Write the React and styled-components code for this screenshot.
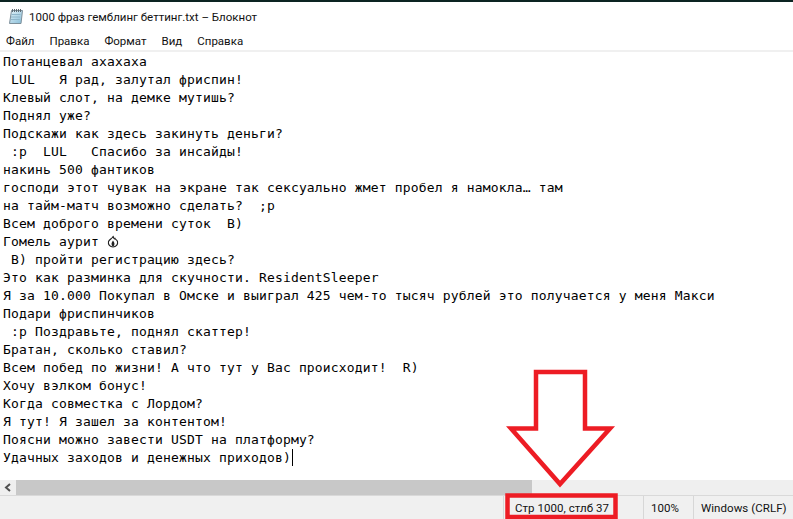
import styled, { createGlobalStyle } from "styled-components";

const GlobalStyle = createGlobalStyle`
  html, body {
    margin: 0;
    padding: 0;
    background: #fff;
    overflow: hidden;
  }
`;

const Window = styled.div`
  position: relative;
  width: 793px;
  height: 519px;
  display: flex;
  flex-direction: column;
  overflow: hidden;
  background: #fff;
  font-family: Roboto, "Noto Sans", sans-serif;
  color: #000;
`;

const TopEdge = styled.div`
  height: 2px;
  background: #0c2422;
`;

const TitleBar = styled.div`
  height: 29px;
  display: flex;
  align-items: center;
  gap: 5px;
  padding-left: 8px;
  font-size: 11.5px;
  color: #111;
`;

const MenuBar = styled.div`
  height: 19px;
  display: flex;
  align-items: center;
  gap: 15px;
  padding-left: 6px;
  font-size: 11.5px;
  color: #111;
`;

const Editor = styled.div`
  flex: 1;
  border-top: 2px solid #f0f0f0;
  padding: 1px 0 0 3px;
  font-family: "DejaVu Sans Mono", monospace;
  font-size: 13px;
  letter-spacing: 0.17px;
  line-height: 18px;
  white-space: pre;
  overflow: hidden;
`;

const Line = styled.div`
  height: 18px;
`;

const Caret = styled.span`
  display: inline-block;
  width: 1px;
  height: 17px;
  margin-left: 1px;
  vertical-align: top;
  background: #000;
`;

const Flame = styled.svg`
  width: 12px;
  height: 13px;
  vertical-align: -2px;
`;

const ScrollBar = styled.div`
  height: 15px;
  display: flex;
  background: #efefef;
`;

const ScrollArrow = styled.div`
  width: 16px;
  display: flex;
  align-items: center;
  justify-content: center;
`;

const ScrollThumb = styled.div`
  width: 516px;
  background: #c8c8c8;
`;

const StatusBar = styled.div`
  height: 23px;
  display: flex;
  align-items: center;
  justify-content: flex-end;
  border-top: 1px solid #d9d9d9;
  background: #f0f0f0;
  font-size: 11.5px;
  letter-spacing: 0.05px;
  color: #111;
`;

const StatusCell = styled.div`
  width: ${(p) => p.$width}px;
  height: 100%;
  box-sizing: border-box;
  display: flex;
  align-items: center;
  padding-left: ${(p) => p.$pad}px;
  border-left: 1px solid #d7d7d7;
  white-space: nowrap;
`;

const Annotation = styled.svg`
  position: absolute;
  inset: 0;
  pointer-events: none;
`;

const lines = [
  "Потанцевал ахахаха",
  " LUL   Я рад, залутал фриспин!",
  "Клевый слот, на демке мутишь?",
  "Поднял уже?",
  "Подскажи как здесь закинуть деньги?",
  " :p  LUL   Спасибо за инсайды!",
  "накинь 500 фантиков",
  "господи этот чувак на экране так сексуально жмет пробел я намокла… там",
  "на тайм-матч возможно сделать?  ;р",
  "Всем доброго времени суток  B)",
];

const linesAfter = [
  " B) пройти регистрацию здесь?",
  "Это как разминка для скучности. ResidentSleeper",
  "Я за 10.000 Покупал в Омске и выиграл 425 чем-то тысяч рублей это получается у меня Макси",
  "Подари фриспинчиков",
  " :p Поздравьте, поднял скаттер!",
  "Братан, сколько ставил?",
  "Всем побед по жизни! А что тут у Вас происходит!  R)",
  "Хочу вэлком бонус!",
  "Когда совместка с Лордом?",
  "Я тут! Я зашел за контентом!",
  "Поясни можно завести USDT на платформу?",
];

function NotepadIcon() {
  return (
    <svg width="16" height="17" viewBox="0 0 16 17">
      <defs>
        <linearGradient id="sheet" x1="0" y1="0" x2="1" y2="1">
          <stop offset="0" stopColor="#e4f2f8" />
          <stop offset="1" stopColor="#86bdd8" />
        </linearGradient>
      </defs>
      <path d="M3.500 2.500H14.500L13 15.500H1.500Z" fill="url(#sheet)" stroke="#7d8f9a" />
      <path d="M3.500 6.500H12.500M3 9H12M2.800 11.500H11.800" stroke="#8fb6ca" />
      <path d="M4.500 1v3M6.500 1v3M8.500 1v3M10.500 1v3M12.500 1v3" stroke="#5f6b73" />
    </svg>
  );
}

export default function App() {
  return (
    <Window>
      <GlobalStyle />
      <TopEdge />
      <TitleBar>
        <NotepadIcon />
        <span>1000 фраз гемблинг беттинг.txt – Блокнот</span>
      </TitleBar>
      <MenuBar>
        <span>Файл</span>
        <span>Правка</span>
        <span>Формат</span>
        <span>Вид</span>
        <span>Справка</span>
      </MenuBar>
      <Editor>
        {lines.map((l, i) => (
          <Line key={i}>{l}</Line>
        ))}
        <Line>
          {"Гомель аурит "}
          <Flame viewBox="0 0 12 13">
            <path
              d="M6 1C6.500 3 2.500 4 1.500 6.500C0.800 9.500 3 12 6 12C9 12 11.200 9.500 10.500 6.500C10 5 8.500 4.500 8 3.500C7.500 4.500 7 4 6 1Z"
              fill="none"
              stroke="#222"
              strokeWidth="1.100"
            />
            <path d="M6 5.500C4.200 7.800 3.800 10 6 11.800C8.200 10 7.800 7.800 6 5.500Z" fill="#222" />
          </Flame>
        </Line>
        {linesAfter.map((l, i) => (
          <Line key={i}>{l}</Line>
        ))}
        <Line>
          Удачных заходов и денежных приходов)
          <Caret />
        </Line>
      </Editor>
      <ScrollBar>
        <ScrollArrow>
          <svg width="8" height="9" viewBox="0 0 8 9">
            <path d="M6 1L2 4.500L6 8" fill="none" stroke="#505050" strokeWidth="2" />
          </svg>
        </ScrollArrow>
        <ScrollThumb />
      </ScrollBar>
      <StatusBar>
        <StatusCell $width={140} $pad={11}>
          Стр 1000, стлб 37
        </StatusCell>
        <StatusCell $width={50} $pad={7}>
          100%
        </StatusCell>
        <StatusCell $width={100} $pad={7}>
          Windows (CRLF)
        </StatusCell>
      </StatusBar>
      <Annotation width="793" height="519" viewBox="0 0 793 519">
        <path
          d="M536 372H585V428.500H610L560 484L511 428.500H536Z"
          fill="none"
          stroke="#ed1c24"
          strokeWidth="4.500"
        />
        <rect x="507.500" y="495.500" width="108" height="21.500" fill="none" stroke="#ed1c24" strokeWidth="4.500" />
      </Annotation>
    </Window>
  );
}
